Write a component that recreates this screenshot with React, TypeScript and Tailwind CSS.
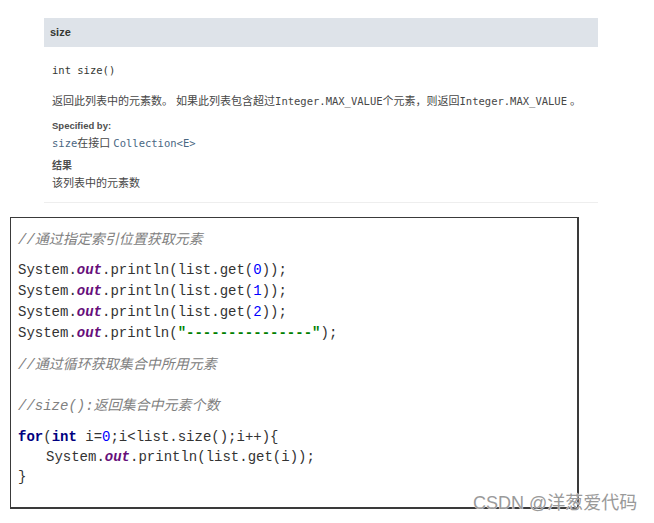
const sans = "font-['Liberation_Sans','Noto_Sans_CJK_SC',sans-serif]";
const mono = "font-['DejaVu_Sans_Mono','Noto_Sans_CJK_SC',monospace]";
const code = "font-['Liberation_Mono','Noto_Sans_CJK_SC',monospace]";

function Out() {
  return <span className="font-bold italic text-[#660e7a]">out</span>;
}

function Num({ n }: { n: string }) {
  return <span className="text-[#0000ff]">{n}</span>;
}

function Comment({ text }: { text: string }) {
  return <div className="italic text-[#808080]">{text}</div>;
}

export default function App() {
  return (
    <div className={`relative h-[523px] w-[654px] overflow-hidden bg-white ${sans}`}>
      {/* javadoc block */}
      <div className="ml-[44px] mt-[18px] w-[554px] border-b border-[#eeeeee]">
        <div className="flex h-[29px] items-center bg-[#dee3e9] px-[6px] text-[11px] font-bold text-[#353833]">
          size
        </div>
        <div className="px-[8px] pb-[12px] text-[#474747]">
          <div className={`mt-[16px] text-[10.5px] leading-[14px] text-[#353833] ${mono}`}>int size()</div>
          <div className="mt-[17px] whitespace-nowrap text-[11px] leading-[14px]">
            返回此列表中的元素数。 如果此列表包含超过<span className={`text-[10.5px] ${mono}`}>Integer.MAX_VALUE</span>个元素，则返回<span className={`text-[10.5px] ${mono}`}>Integer.MAX_VALUE</span> 。
          </div>
          <div className="mt-[12px] text-[9.5px] font-bold leading-[12px] text-[#4e4e4e]">Specified by:</div>
          <div className="mt-[4px] text-[11px] leading-[14px]">
            <span className={`text-[10.5px] text-[#4a6782] ${mono}`}>size</span>在接口{" "}
            <span className={`text-[10.5px] text-[#4a6782] ${mono}`}>Collection&lt;E&gt;</span>
          </div>
          <div className="mt-[9px] text-[10px] font-bold leading-[13px] text-[#4e4e4e]">结果</div>
          <div className="mt-[4px] text-[11px] leading-[14px]">该列表中的元素数</div>
        </div>
      </div>

      {/* code box */}
      <div
        className={`ml-[10px] mt-[14px] h-[292px] w-[569px] border border-r-2 border-b-2 border-[#3a3a3a] pl-[7px] pt-[12px] text-[14px] leading-[21px] text-[#333333] ${code}`}
      >
        <Comment text="//通过指定索引位置获取元素" />
        <div className="mt-[9px]">
          System.<Out />.println(list.get(<Num n="0" />));
        </div>
        <div>
          System.<Out />.println(list.get(<Num n="1" />));
        </div>
        <div>
          System.<Out />.println(list.get(<Num n="2" />));
        </div>
        <div>
          System.<Out />.println(<span className="font-bold text-[#008000]">"---------------"</span>);
        </div>
        <div className="mt-[11px]">
          <Comment text="//通过循环获取集合中所用元素" />
        </div>
        <div className="mt-[20px]">
          <Comment text="//size():返回集合中元素个数" />
        </div>
        <div className="mt-[10px] leading-[20px]">
          <span className="font-bold text-[#000080]">for</span>(<span className="font-bold text-[#000080]">int</span> i=<Num n="0" />;i&lt;list.size();i++){"{"}
        </div>
        <div className="ml-[28px] leading-[20px]">
          System.<Out />.println(list.get(i));
        </div>
        <div className="leading-[21px]">{"}"}</div>
      </div>

      {/* watermark */}
      <div className="absolute left-[473px] top-[492px] text-[18px] leading-[22px] text-[#9a9a9a] [text-shadow:0_0_1px_#ffffff,0_0_1px_#ffffff]">
        CSDN @洋葱爱代码
      </div>
    </div>
  );
}
